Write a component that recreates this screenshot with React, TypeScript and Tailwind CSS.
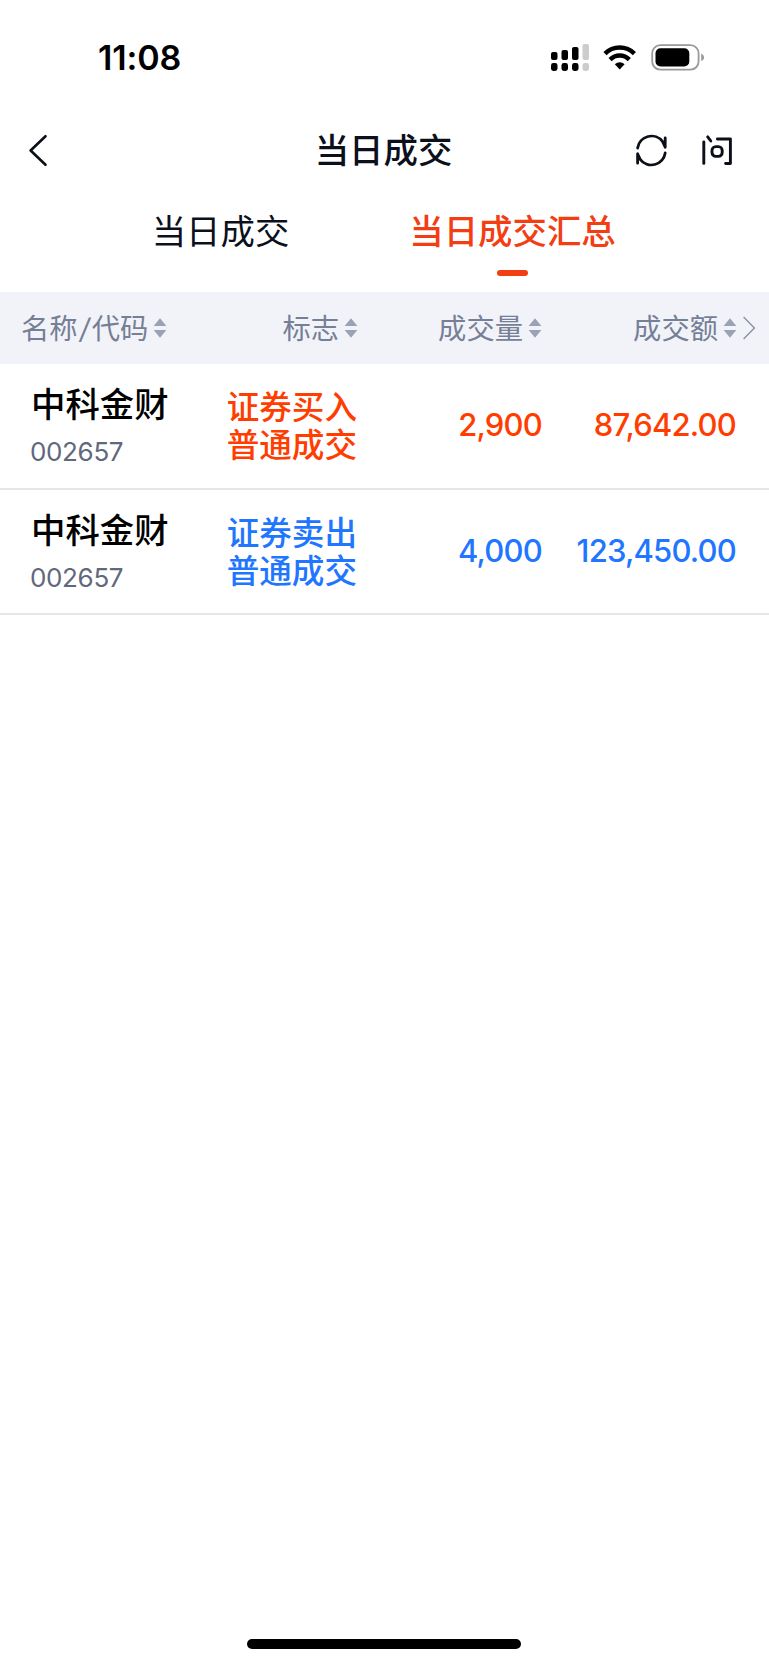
import { clsx } from 'clsx'

interface Trade {
  name: string
  code: string
  side: 'buy' | 'sell'
  flags: string[]
  volume: string
  amount: string
}

const TRADES: Trade[] = [
  { name: '中科金财', code: '002657', side: 'buy', flags: ['证券买入', '普通成交'], volume: '2,900', amount: '87,642.00' },
  { name: '中科金财', code: '002657', side: 'sell', flags: ['证券卖出', '普通成交'], volume: '4,000', amount: '123,450.00' },
]

const SIDE_TEXT = {
  buy: 'text-[#ff3d00]',
  sell: 'text-[#2176ff]',
}

// Shared by the header and the rows so the right edges line up
const COLUMNS = 'grid grid-cols-[168px_190px_184px_194px_33px]'

function StatusBar() {
  return (
    <div className="flex h-[110px] items-start justify-between pt-[37px] pr-[64px] pl-[98px]">
      <span className="text-[34px] leading-[42px] font-semibold tracking-[-0.1px] text-black">11:08</span>
      <div className="flex h-[42px] items-center">
        <svg width="40" height="30" viewBox="0 0 40 30" className="mr-[13px]">
          <rect x="1" y="9" width="6.5" height="8" rx="2" />
          <rect x="11.5" y="7" width="6.5" height="10" rx="2" />
          <rect x="22" y="4" width="6.5" height="13" rx="2" />
          <rect x="32.5" y="1" width="6.5" height="16" rx="2" fill="#cccccc" />
          <rect x="1" y="20" width="6.5" height="8" rx="2.4" />
          <rect x="11.5" y="20" width="6.5" height="8" rx="2.4" />
          <rect x="22" y="20" width="6.5" height="8" rx="2.4" />
          <rect x="32.5" y="20" width="6.5" height="8" rx="2.4" fill="#cccccc" />
        </svg>
        <svg width="34" height="30" viewBox="0 0 34 30" className="mr-[13px]" fill="none" stroke="#000" strokeWidth="4.4">
          <path d="M2 10.6C10 2.4 23.4 2.4 31.4 10.6" />
          <path d="M7.1 16.6C12.4 11.2 21 11.2 26.3 16.6" />
          <path d="M16.7 26.4L11.8 21.2C14.6 18.5 18.8 18.5 21.6 21.2Z" fill="#000" stroke="none" />
        </svg>
        <svg width="55" height="30" viewBox="0 0 55 30">
          <rect x="2.2" y="2.2" width="46.4" height="24.4" rx="8" fill="none" stroke="#999" strokeWidth="1.8" />
          <rect x="5.5" y="5.3" width="33.8" height="18.2" rx="5" />
          <path d="M51.2 10.8C53 11.4 54 12.8 54 14.4C54 16 53 17.4 51.2 18Z" fill="#999" />
        </svg>
      </div>
    </div>
  )
}

function NavBar() {
  return (
    <header className="grid h-[80px] grid-cols-[1fr_auto_1fr] items-center">
      <button type="button" aria-label="返回" className="pl-[28px]">
        <svg width="22" height="36" viewBox="0 0 22 36" fill="none" stroke="#0b0f18" strokeWidth="2.6" strokeLinecap="round" strokeLinejoin="round">
          <path d="M17.5 4.2L2.6 18.5L17.5 32.8" />
        </svg>
      </button>
      <h1 className="pt-[2px] pr-[2px] text-[34.4px] leading-[48px] font-medium text-[#0b101c]">当日成交</h1>
      <div className="flex items-center justify-end gap-[32px] pr-[34px]">
        <button type="button" aria-label="刷新">
          <svg width="34" height="36" viewBox="0 0 34 36" fill="none" stroke="#0b0f18" strokeWidth="2.8" strokeLinecap="round" strokeLinejoin="round">
            <path d="M2.6 16A14 14 0 0 1 27.6 9.6L30.2 15.2V5.8" />
            <path d="M27.4 9.4L30.2 10V15.2Z" fill="#0b0f18" strokeWidth="1" />
            <path d="M30.2 21A14 14 0 0 1 5.2 27.4L2.6 21.8V31.2" />
            <path d="M5.4 27.6L2.6 27V21.8Z" fill="#0b0f18" strokeWidth="1" />
          </svg>
        </button>
        <button type="button" aria-label="问">
          <svg width="34" height="36" viewBox="0 0 34 36" fill="none" stroke="#0b0f18" strokeWidth="2.9" strokeLinecap="round" strokeLinejoin="round">
            <path d="M2.8 10V31.4" />
            <path d="M6.7 4.8L9.8 9" />
            <path d="M16.4 7H29.4V31.5H24.6" />
            <rect x="11" y="14.6" width="10.2" height="9.8" rx="3.8" />
          </svg>
        </button>
      </div>
    </header>
  )
}

function Tabs() {
  return (
    <nav className="flex h-[102px] pt-[18px] pl-[75px] text-[34.4px] leading-[48px]">
      <div className="flex w-[291px] flex-col items-center">
        <button type="button" className="text-[#0b101c]">当日成交</button>
      </div>
      <div className="flex w-[293px] flex-col items-center">
        <button type="button" className="whitespace-nowrap font-medium text-[#f33e14]">当日成交汇总</button>
        <span className="mt-[14px] h-[6px] w-[31px] rounded-full bg-[#f33e14]" />
      </div>
    </nav>
  )
}

function SortLabel({ label }: { label: string }) {
  const parts = label.split('/')
  return (
    <button type="button" className="flex items-center gap-[5px] whitespace-nowrap">
      <span className="pt-[2px]">
        {parts[0]}
        {parts[1] && <span className="mx-[2px] inline-block -skew-x-8">/</span>}
        {parts[1]}
      </span>
      <svg width="14" height="22" viewBox="0 0 14 22" fill="#9ba2b5">
        <path d="M7 1.2L13.4 9H0.6Z" />
        <path d="M7 20.8L13.4 13H0.6Z" />
      </svg>
    </button>
  )
}

function TableHeader() {
  return (
    <div className={clsx(COLUMNS, 'h-[72px] items-center bg-[#f2f3f8] text-[28.3px] leading-[40px] text-[#757f97]')}>
      <div className="flex pl-[21px]"><SortLabel label="名称/代码" /></div>
      <div className="flex justify-end"><SortLabel label="标志" /></div>
      <div className="flex justify-end"><SortLabel label="成交量" /></div>
      <div className="-mr-px flex justify-end"><SortLabel label="成交额" /></div>
      <svg width="20" height="26" viewBox="0 0 20 26" className="ml-[6px]" fill="none" stroke="#8a92a6" strokeWidth="1.4">
        <path d="M1.6 2L12.4 13L1.6 24" />
      </svg>
    </div>
  )
}

function TradeRow({ trade }: { trade: Trade }) {
  const color = SIDE_TEXT[trade.side]
  return (
    <div className={clsx(COLUMNS, 'h-[126px] border-b-2 border-[#e3e6eb] last:h-[125px]')}>
      <div className="pt-[17px] pl-[31px]">
        <div className="text-[34.4px] leading-[48px] font-medium whitespace-nowrap text-black">{trade.name}</div>
        <div className="-ml-px mt-[5px] text-[26px] leading-[36px] tracking-[-0.35px] text-[#5f687c]">{trade.code}</div>
      </div>
      <div className={clsx('flex flex-col items-end pt-[25px] pr-px text-[32.6px] leading-[37.5px] font-medium', color)}>
        {trade.flags.map(flag => (
          <span key={flag}>{flag}</span>
        ))}
      </div>
      <div className={clsx('pt-[40px] text-right text-[31px] leading-[42px] font-[450] tracking-[-0.8px]', color)}>{trade.volume}</div>
      <div className={clsx('pt-[40px] text-right text-[31px] leading-[42px] font-[450] tracking-[-0.8px]', color)}>{trade.amount}</div>
    </div>
  )
}

export default function App() {
  return (
    <div className="flex h-[1665px] w-[769px] flex-col overflow-hidden bg-white font-['Inter','Noto_Sans_CJK_SC',sans-serif]">
      <StatusBar />
      <NavBar />
      <Tabs />
      <main className="flex-1">
        <TableHeader />
        <div>
          {TRADES.map(trade => (
            <TradeRow key={trade.side} trade={trade} />
          ))}
        </div>
      </main>
      <div className="flex justify-center pr-px pb-[16px]">
        <div className="h-[10px] w-[274px] rounded-full bg-black" />
      </div>
    </div>
  )
}
